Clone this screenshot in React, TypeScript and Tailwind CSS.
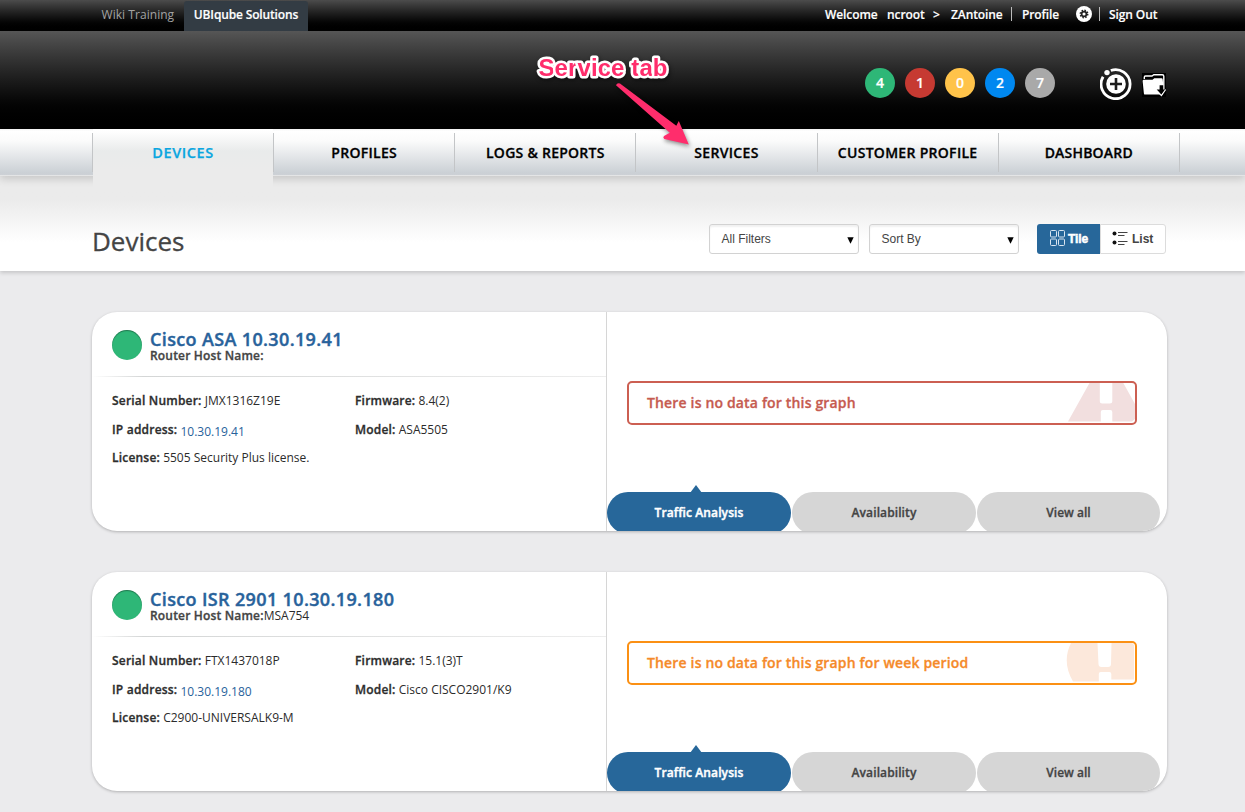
import React from "react";

const NAV = [
  { label: "DEVICES", type: "text-[14.5px] tracking-[0.6px] leading-[47px]" },
  { label: "PROFILES", type: "text-sm tracking-[0.3px] leading-[48px]" },
  { label: "LOGS & REPORTS", type: "text-sm tracking-[0.26px] leading-[48px]" },
  { label: "SERVICES", type: "text-sm tracking-[0.35px] leading-[48px]" },
  { label: "CUSTOMER PROFILE", type: "text-sm tracking-[0.3px] leading-[48px]" },
  { label: "DASHBOARD", type: "text-sm tracking-[0.2px] leading-[48px]" },
];

const COUNTS = [
  { value: 4, color: "bg-[#2eb777]" },
  { value: 1, color: "bg-[#c63a32]" },
  { value: 0, color: "bg-[#ffc34a]" },
  { value: 2, color: "bg-[#0088f0]" },
  { value: 7, color: "bg-[#a9a9a9]" },
];

type Device = {
  name: string;
  host: string;
  serial: string;
  ip: string;
  license: string;
  firmware: string;
  model: string;
  message: string;
  level: "error" | "warning";
};

const DEVICES: Device[] = [
  {
    name: "Cisco ASA 10.30.19.41",
    host: "",
    serial: "JMX1316Z19E",
    ip: "10.30.19.41",
    license: "5505 Security Plus license.",
    firmware: "8.4(2)",
    model: "ASA5505",
    message: "There is no data for this graph",
    level: "error",
  },
  {
    name: "Cisco ISR 2901 10.30.19.180",
    host: "MSA754",
    serial: "FTX1437018P",
    ip: "10.30.19.180",
    license: "C2900-UNIVERSALK9-M",
    firmware: "15.1(3)T",
    model: "Cisco CISCO2901/K9",
    message: "There is no data for this graph for week period",
    level: "warning",
  },
];

function TopBar() {
  return (
    <div className="flex h-[31px] justify-between bg-linear-to-b from-[#4c4c4c] to-black pl-[92px] pr-[87px] text-xs leading-[30px] text-white">
      <div className="flex">
        <span className="w-[92px] pl-[9.5px] tracking-[0.05px] text-[#a3a3a3]">Wiki Training</span>
        <span className="mt-px h-[30px] w-[124px] rounded-t-[3px] bg-[#333c44] text-center font-semibold leading-7 tracking-[-0.15px] [-webkit-text-stroke:0.15px_white]">
          UBIqube Solutions
        </span>
      </div>
      <div className="flex font-semibold tracking-[-0.1px] [-webkit-text-stroke:0.15px_white]">
        <span className="w-[62px]">Welcome</span>
        <span className="w-[46px]">ncroot</span>
        <span className="w-[18px]">&gt;</span>
        <span className="w-[60px]">ZAntoine</span>
        <i className="mt-[7px] h-[14px] w-px bg-[#bbb]" />
        <span className="w-[64px] pl-[10px]">Profile</span>
        <svg className="mt-[6px] h-4 w-4" viewBox="0 0 16 16">
          <circle cx="8" cy="8" r="8" fill="#fff" />
          <circle cx="8" cy="8" r="3.6" fill="none" stroke="#222" strokeWidth="1.7" strokeDasharray="1.45 1.377" />
          <circle cx="8" cy="8" r="2.4" fill="none" stroke="#222" strokeWidth="1.7" />
        </svg>
        <i className="ml-[7px] mt-[7px] h-[14px] w-px bg-[#bbb]" />
        <span className="w-[58px] whitespace-nowrap pl-[9px]">Sign Out</span>
      </div>
    </div>
  );
}

function AddIcon() {
  return (
    <svg className="h-8 w-8" viewBox="0 0 32 32">
      <path d="M10.8 2.5A14.5 14.5 0 1 1 3.1 8.8" fill="none" stroke="#fff" strokeWidth="2.8" />
      <circle cx="7" cy="4.6" r="2.7" fill="#fff" />
      <circle cx="16" cy="16" r="9.8" fill="#fff" />
      <path d="M16 10v12M10 16h12" stroke="#1c1c1c" strokeWidth="2.6" />
    </svg>
  );
}

function FolderIcon() {
  return (
    <svg className="h-6 w-6 bg-black" viewBox="0 0 24 24">
      <path d="M2.3 6V4.2q0-1.2 1.2-1.2H10l1.8-1.3h8.4q1.6 0 1.6 1.5V17" fill="none" stroke="#fff" strokeWidth="1.4" />
      <path d="M.6 8q0-1.2 1.2-1.2h8.7l1.8-1.6h7.2q1.2 0 1.2 1.2l.6 5.6-.5 9.6H3.2q-1.2 0-1.3-1.2z" fill="#fff" />
      <path d="M17.6 12.2h3.6v4.2H24l-4.6 5.4-4.7-5.4h2.9z" fill="#000" />
      <path d="m15 18.2 4.4 4.4 4.2-6.1" fill="none" stroke="#fff" strokeWidth="1.1" />
    </svg>
  );
}

function Callout() {
  return (
    <div className="pointer-events-none absolute left-[530px] top-[48px] z-20 h-[110px] w-[180px]">
      <svg className="absolute inset-0 drop-shadow-[1px_2px_2px_rgba(0,0,0,0.45)]" width="180" height="110" viewBox="0 0 180 110">
        <path
          d="M86 37.3Q87 34.5 90 35.5L146.3 77.8L148.8 73L158.8 96.5L134.3 91Q132.5 89.5 134 88L139.8 84.8Z"
          fill="#ff2d6c"
        />
        <text
          x="8.5"
          y="28"
          textLength="129"
          fill="#ff2d6c"
          stroke="#fff"
          strokeWidth="5"
          strokeLinejoin="round"
          paintOrder="stroke"
          className="font-['Liberation_Sans',sans-serif] text-[24px] font-bold"
        >
          Service tab
        </text>
      </svg>
    </div>
  );
}

function Header() {
  return (
    <header className="flex h-[98px] justify-end bg-linear-to-b from-[#565656] to-black pr-[79px]">
      <div className="mt-[37px] flex gap-[10px]">
        {COUNTS.map((c) => (
          <span
            key={c.value}
            className={`flex h-[30px] w-[30px] items-center justify-center rounded-full text-sm font-semibold text-white [-webkit-text-stroke:0.2px_white] ${c.color}`}
          >
            {c.value}
          </span>
        ))}
      </div>
      <div className="ml-[45px] mt-[37px] flex gap-[10px]">
        <AddIcon />
        <div className="pt-[5px]">
          <FolderIcon />
        </div>
      </div>
    </header>
  );
}

function Nav() {
  return (
    <nav className="relative z-10 flex h-[47px] border-b border-[#e4e5e6] bg-[linear-gradient(180deg,#f2f2f2_0px,#fff_2px,#fbfbfb_12px,#cbd0d5_44px,#cdd1d6_46px)] pl-[92px] shadow-[0_3px_8px_rgba(0,0,0,0.16)]">
      {NAV.map(({ label, type }, i) => (
        <div key={label} className="flex w-[181.15px]">
          <i className="mt-1 h-[39px] w-px bg-[#c3c5c7]" />
          <span
            className={`flex-1 text-center font-semibold ${type} ${
              i === 0
                ? "h-[60px] bg-[linear-gradient(180deg,#fff_0px,#fdfdfd_4px,#e9ebeb_22px,#ebebeb_40px)] text-[#0ba6e0] [-webkit-text-stroke:0.25px_#0ba6e0]"
                : "text-black [-webkit-text-stroke:0.3px_black]"
            }`}
          >
            {label}
          </span>
        </div>
      ))}
      <i className="mt-1 h-[39px] w-px bg-[#c3c5c7]" />
    </nav>
  );
}

function Select({ label }: { label: string }) {
  return (
    <div className="flex h-[30px] w-[150px] items-center justify-between rounded-[3px] border border-[#d2d2d2] bg-white pl-[11.5px] pr-[4px] font-['Liberation_Sans',sans-serif] text-xs text-[#444] shadow-[inset_0_2px_2px_rgba(0,0,0,0.06)]">
      {label}
      <svg className="mt-[2px] h-[7px] w-[7px]" viewBox="0 0 7 7">
        <path d="M.3.3h6.4L3.5 6.8z" fill="#000" />
      </svg>
    </div>
  );
}

function Toolbar() {
  return (
    <section className="relative flex h-[95px] justify-between bg-linear-to-b from-[#ebebeb] from-25% to-white to-70% pl-[92px] pr-[79px] shadow-[0_2px_4px_rgba(0,0,0,0.16)]">
      <h1 className="mt-[47px] text-[26px] leading-9 text-[#444] [-webkit-text-stroke:0.3px_#444]">Devices</h1>
      <div className="mt-[48px] flex">
        <Select label="All Filters" />
        <div className="w-[10px]" />
        <Select label="Sort By" />
        <div className="ml-[18px] flex h-[30px] w-[129px] font-['Liberation_Sans',sans-serif] text-xs font-bold">
          <div className="flex w-[63px] items-center rounded-l-[3px] bg-[#27679a] pl-[13px] tracking-[-0.1px] text-white [-webkit-text-stroke:0.5px_white]">
            <svg className="mt-[-2px] mr-[3px] h-4 w-[15px]" viewBox="0 0 15 16" fill="#27679a" stroke="#d8e5f0">
              <rect x=".5" y=".5" width="6" height="6.5" rx="1" />
              <rect x="8.5" y=".5" width="6" height="6.5" rx="1" />
              <rect x=".5" y="9" width="6" height="6.5" rx="1" />
              <rect x="8.5" y="9" width="6" height="6.5" rx="1" />
            </svg>
            Tile
          </div>
          <div className="flex w-[66px] items-center rounded-r-[3px] border border-[#dcdcdc] bg-white pl-[11px] text-[#444]">
            <svg className="mt-[-2px] mr-[4px] h-[14px] w-4" viewBox="0 0 16 14" stroke="#444">
              <circle cx="2.5" cy="2.5" r="2" fill="#111" stroke="none" />
              <circle cx="2.5" cy="11.5" r="2" fill="#111" stroke="none" />
              <path d="M6 1.5h9.5M6 4.5h6.5M6 10.5h9.5M6 13.5h6.5" />
            </svg>
            List
          </div>
        </div>
      </div>
    </section>
  );
}

function AlertMark({ level }: { level: Device["level"] }) {
  return level === "error" ? (
    <svg className="h-10 w-[67px]" viewBox="0 0 67 40">
      <path
        d="M21.5 0h10.3v18q0 2.5 2.5 2.5h7.5q2.5 0 2.5-2.5V0h11L67 21v15l-3 2.5H44.3V29q0-2-2-2h-7.5q-2 0-2 2v9.5H0z"
        fill="#f2dfdf"
      />
    </svg>
  ) : (
    <svg className="h-10 w-[69px]" viewBox="0 0 69 40">
      <path
        d="M5 0h26.5l1 21q0 3 3 3h6.5q3 0 3-3l.5-21H66l2 2v34.5H45.3V31q0-2-2-2h-8.5q-2 0-2 2v7.5H7C-1 25-1 12 5 0z"
        fill="#fce8db"
      />
    </svg>
  );
}

function Field({ label, children }: { label: string; children: React.ReactNode }) {
  return (
    <>
      <b className="font-semibold tracking-[0.2px] text-[#2d2d2d] [-webkit-text-stroke:0.3px_#2d2d2d]">{label}</b>{" "}
      {children}
    </>
  );
}

function DeviceCard({ d }: { d: Device }) {
  return (
    <article className="flex h-[219px] w-[1075px] overflow-hidden rounded-[25px] bg-white shadow-[0_1px_3px_rgba(0,0,0,0.25)]">
      <div className="w-[515px] border-r border-[#d6d6d6] text-xs text-[#2b2b2b]">
        <div className="flex h-[64px] pl-5 pt-[18px]">
          <span className="mr-2 h-[30px] w-[30px] rounded-full bg-[#2eb777] shadow-[inset_0_1px_1px_rgba(0,0,0,0.35)]" />
          <div>
            <h2 className="mt-[-1px] text-[18px] font-semibold leading-[21px] tracking-[0.36px] text-[#28629b] [-webkit-text-stroke:0.4px_#28629b]">
              {d.name}
            </h2>
            <p className="mt-[-1px] leading-[14px]">
              <b className="font-semibold tracking-[0.18px] text-[#444] [-webkit-text-stroke:0.3px_#444]">
                Router Host Name:
              </b>
              {d.host}
            </p>
          </div>
        </div>
        <div className="h-px bg-linear-to-r from-white via-[#d4d6d6] via-10% to-[#ededed]" />
        <div className="flex pl-5 pt-[15px] leading-[17px]">
          <div className="w-[243px]">
            <p>
              <Field label="Serial Number:">{d.serial}</Field>
            </p>
            <p className="mt-3">
              <Field label="IP address:">
                <span className="relative top-[2px] text-[#28629b]">{d.ip}</span>
              </Field>
            </p>
            <p className="mt-[11px]">
              <Field label="License:">{d.license}</Field>
            </p>
          </div>
          <div>
            <p>
              <Field label="Firmware:">{d.firmware}</Field>
            </p>
            <p className="mt-3">
              <Field label="Model:">{d.model}</Field>
            </p>
          </div>
        </div>
      </div>
      <div className="flex flex-1 flex-col justify-between">
        <div
          className={`ml-5 mt-[69px] flex h-[44px] w-[510px] justify-between overflow-hidden rounded-[5px] border-2 pl-[18px] text-sm font-semibold leading-10 tracking-[0.16px] ${
            d.level === "error"
              ? "border-[#cc5f52] text-[#c65b50] [-webkit-text-stroke:0.3px_#c65b50]"
              : "border-[#fb9014] text-[#f58a2a] [-webkit-text-stroke:0.3px_#f58a2a]"
          }`}
        >
          <span>{d.message}</span>
          <AlertMark level={d.level} />
        </div>
        <div className="flex gap-px text-center text-xs font-semibold text-[#444]">
          <div className="relative h-[39px] w-[184px] text-white [-webkit-text-stroke:0.4px_white]">
            <svg className="absolute left-[83px] top-[-7px]" width="12" height="8" viewBox="0 0 12 8">
              <path d="M6 0l6 8H0z" fill="#27679a" />
            </svg>
            <div className="h-full overflow-hidden">
              <div className="h-[42px] rounded-[21px] bg-[#27679a] leading-[41px] tracking-[0.1px]">Traffic Analysis</div>
            </div>
          </div>
          <div className="h-[39px] w-[184px] overflow-hidden [-webkit-text-stroke:0.3px_#444]">
            <div className="h-[42px] rounded-[21px] bg-[#d6d6d6] leading-[41px] tracking-[0.1px]">Availability</div>
          </div>
          <div className="h-[39px] w-[183px] overflow-hidden [-webkit-text-stroke:0.3px_#444]">
            <div className="h-[42px] rounded-[21px] bg-[#d6d6d6] leading-[41px]">View all</div>
          </div>
        </div>
      </div>
    </article>
  );
}

export default function App() {
  return (
    <div className="relative h-[812px] w-[1245px] overflow-hidden bg-[#ebebed] font-['Open_Sans',sans-serif]">
      <TopBar />
      <Header />
      <Nav />
      <Toolbar />
      <main className="flex flex-col gap-[41px] pl-[92px] pt-[41px]">
        {DEVICES.map((d) => (
          <DeviceCard key={d.name} d={d} />
        ))}
      </main>
      <Callout />
    </div>
  );
}
